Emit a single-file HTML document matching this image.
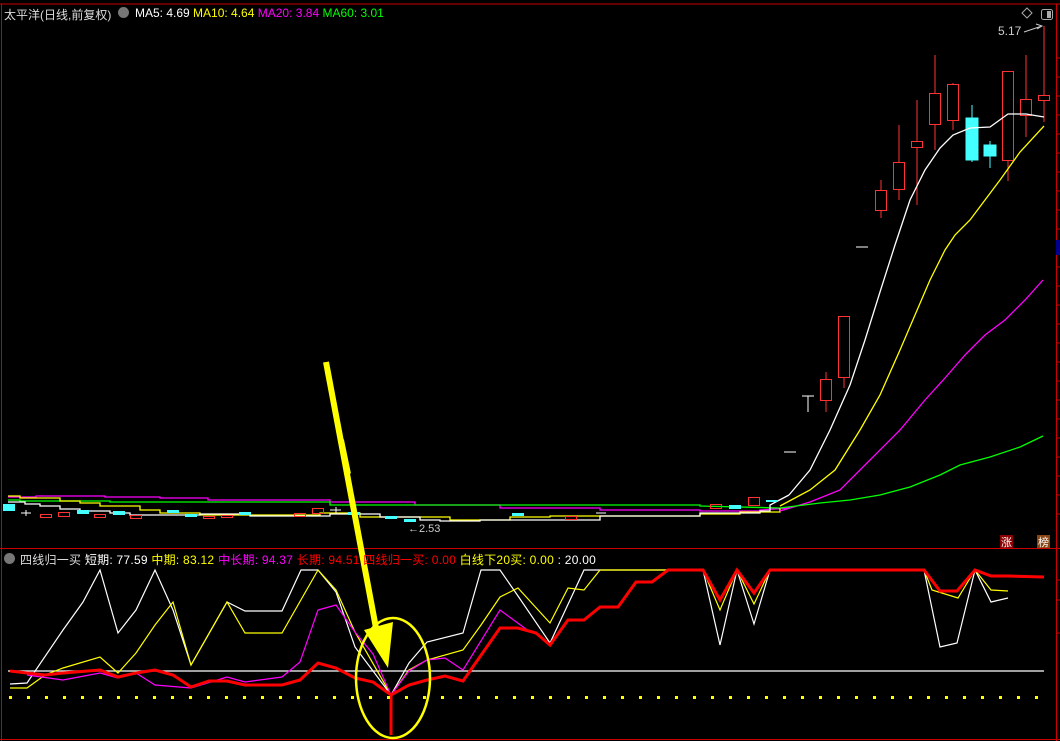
<!DOCTYPE html><html><head><meta charset="utf-8"><style>
html,body{margin:0;padding:0;background:#000;width:1060px;height:741px;overflow:hidden;font-family:"Liberation Sans","Noto Sans CJK SC",sans-serif}
.t{position:absolute;font-size:12px;white-space:nowrap;top:6px}
</style></head><body>
<svg width="1060" height="741" style="position:absolute;left:0;top:0" xmlns="http://www.w3.org/2000/svg">
<g stroke="#c00" fill="none">
<line x1="0" y1="4" x2="1060" y2="4"/><line x1="1.5" y1="4" x2="1.5" y2="741"/>
<line x1="1056.5" y1="4" x2="1056.5" y2="741"/><line x1="0" y1="548.5" x2="1060" y2="548.5"/>
<line x1="0" y1="739.5" x2="1060" y2="739.5"/>
</g>
<g stroke="#c00"><path d="M1056 58h4M1056 77h4M1056 96h4M1056 115h4M1056 134h4M1056 153h4M1056 172h4M1056 191h4M1056 210h4M1056 229h4M1056 267h4M1056 286h4M1056 305h4M1056 324h4M1056 343h4M1056 362h4M1056 381h4M1056 400h4M1056 419h4M1056 438h4M1056 457h4M1056 476h4M1056 495h4M1056 514h4M1056 580h4M1056 600h4M1056 633h4"/></g>
<rect x="1056" y="240" width="4" height="15" fill="#00008b"/>
<g fill="none" stroke-width="1.3">
<path stroke="#f0f" d="M8 497H36V496H105V497H160V498H208V500H330V502H415V505H500V508H600V510H700V511H760V510L790 508"/>
<path stroke="#0f0" d="M8 500H20V501H110V502H330V505H700V506L780 508"/>
<path stroke="#ff0" d="M8 496H20V498H60V501H80V503H100V506H140V510H160V513H200V515H320V513H360V517H450V520H510V517H550V516H700V514H740V512H780V508"/>
<path stroke="#fff" d="M8 502H25V504H40V506H60V509H80V511H110V513H130V515H200V514H250V516H330V514H380V517H420V520H440V521H480V520H600V516H700V513H760V511H770V505L789 495"/>
</g>
<g fill="#4ff"><rect x="3" y="504" width="12" height="7"/><rect x="77" y="510" width="12" height="4"/><rect x="113" y="511" width="12" height="4"/><rect x="167" y="510" width="12" height="3"/><rect x="185" y="514" width="12" height="3"/><rect x="239" y="512" width="12" height="3"/><rect x="348" y="512" width="12" height="3"/><rect x="385" y="516" width="12" height="3"/><rect x="404" y="519" width="12" height="3"/><rect x="512" y="513" width="12" height="3"/><rect x="729" y="505" width="12" height="4"/><rect x="766" y="500" width="12" height="2"/></g>
<g fill="none" stroke="#f33"><rect x="40.5" y="514.5" width="11" height="3"/><rect x="58.5" y="512.5" width="11" height="4"/><rect x="94.5" y="514.5" width="11" height="3"/><rect x="130.5" y="515.5" width="11" height="3"/><rect x="203.5" y="516.5" width="11" height="2"/><rect x="221.5" y="515.5" width="11" height="2"/><rect x="294.5" y="513.5" width="11" height="3"/><rect x="312.5" y="508.5" width="11" height="5"/><rect x="565.5" y="516.5" width="11" height="3"/><rect x="710.5" y="504.5" width="11" height="4"/><rect x="748.5" y="497.5" width="11" height="8"/></g>
<g stroke="#fff"><path d="M21 513h10M26 510v6M330 510h11M336 507v6M596 513h10"/></g>
<text x="408" y="532" fill="#ccc" font-size="11" font-family="Liberation Sans">←2.53</text>
<g stroke="#fff"><path d="M784 452h12M802 396h12M808 396v16M856 247h12"/></g>
<g stroke="#f33" fill="none">
<path d="M826 372v40M844 377v11M881 180v38M899 125v75M917 100v105M935 55v95M953 83v47M1008 71v110M1026 55v82M1044 26v96"/>
<rect x="820.5" y="379.5" width="11" height="21" fill="#000"/><rect x="838.5" y="316.5" width="11" height="61" fill="#000"/>
<rect x="875.5" y="190.5" width="11" height="20" fill="#000"/><rect x="893.5" y="162.5" width="11" height="27" fill="#000"/>
<rect x="911.5" y="141.5" width="11" height="6" fill="#000"/><rect x="929.5" y="93.5" width="11" height="31" fill="#000"/>
<rect x="947.5" y="84.5" width="11" height="36" fill="#000"/><rect x="1002.5" y="71.5" width="11" height="89" fill="#000"/>
<rect x="1020.5" y="99.5" width="11" height="16" fill="#000"/><rect x="1038.5" y="95.5" width="11" height="5" fill="#000"/>
</g>
<g stroke="#4ff" fill="#4ff"><path d="M972 105v57M990 141v27"/><rect x="966" y="118" width="12" height="42"/><rect x="984" y="145" width="12" height="11"/></g>
<g fill="none" stroke-width="1.3">
<path stroke="#fff" d="M789 495L810 470L830 430L850 385L865 340L880 292L895 245L910 200L925 170L940 148L953 135L970 128L990 127L1008 114L1026 114L1044 117"/>
<path stroke="#ff0" d="M780 506L810 490L835 470L860 430L880 395L900 350L915 315L930 280L945 250L955 235L970 220L985 200L1000 180L1020 152L1044 126"/>
<path stroke="#f0f" d="M780 511L810 502L840 490L870 460L900 430L925 400L945 378L965 355L985 335L1005 320L1025 300L1043 280"/>
<path stroke="#0f0" d="M780 508L820 503L850 500L880 495L910 487L940 475L960 465L990 457L1020 447L1043 436"/>
</g>
<text x="998" y="35" fill="#ccc" font-size="12" font-family="Liberation Sans">5.17</text>
<path d="M1024 32L1042 26M1036 24l6 2-5 3" stroke="#ccc" fill="none"/>
<path d="M1027 8l5 5-5 5-5-5z" stroke="#aaa" fill="none"/>
<rect x="1041.5" y="9.5" width="11" height="10" rx="2" stroke="#aaa" fill="none"/><rect x="1047" y="11" width="4" height="7" fill="#aaa"/>
<rect x="1000" y="535" width="13" height="13" fill="#8b0000"/><rect x="1037" y="535" width="13" height="13" fill="#8b4513"/>
<text x="1001" y="546" fill="#fff" font-size="11" font-family="Noto Sans CJK SC">涨</text>
<text x="1038" y="546" fill="#fff" font-size="11" font-family="Noto Sans CJK SC">榜</text>
<line x1="8" y1="671" x2="1044" y2="671" stroke="#fff" stroke-width="1.3"/>
<g fill="none" stroke-width="1.2">
<path stroke="#fff" d="M10 684L27 683L63 630L83 602L100 570L118 633L136 610L155 570L173 610L191 665L227 602L245 611L282 611L301 570L318 570L336 592L355 647L391 695L409 663L427 642L463 633L481 570L500 570L518 596L550 643L584 570L703 570L720 645L737 570L754 624L770 570L924 570L940 647L957 643L975 570L991 602L1008 598"/>
<path stroke="#ff0" d="M10 688L27 688L45 675L63 668L100 657L118 673L136 653L155 625L173 602L191 665L227 602L245 633L282 633L318 570L336 590L355 632L391 695L409 670L427 660L463 650L481 625L500 597L518 588L550 623L568 588L584 590L600 570L703 570L720 610L737 570L754 604L770 570L924 570L932 590L958 598L975 570L991 590L1008 591"/>
<path stroke="#f0f" d="M27 675L63 680L100 673L118 678L136 673L155 685L191 688L227 677L245 682L282 677L300 662L318 610L336 605L355 632L373 654L391 695L409 671L427 660L445 658L463 670L500 610L530 632"/>
</g>
<path stroke="#f00" stroke-width="3" fill="none" d="M10 671L27 673L45 675L63 673L100 670L118 677L136 673L155 670L173 675L191 687L209 681L227 681L245 685L282 685L300 680L318 663L336 668L355 678L373 682L391 695L409 685L427 680L445 676L463 681L500 628L518 628L536 633L550 645L568 620L584 620L600 607L618 607L636 582L652 582L668 570L703 570L720 600L737 570L754 593L770 570L924 570L940 591L957 591L975 570L991 576L1008 576L1044 577M391 695V735"/>
<ellipse cx="393" cy="678" rx="37" ry="60" stroke="#ff0" stroke-width="2.5" fill="none"/>
<path d="M326 362L376 628" stroke="#ff0" stroke-width="6"/>
<path d="M364 630L388 668L393 622Z" fill="#ff0"/>
</svg>
<div class="t" style="left:4px;color:#ddd">太平洋(日线,前复权)</div>
<div style="position:absolute;left:118px;top:7px;width:11px;height:11px;border-radius:50%;background:#777"></div>
<div class="t" style="left:135px;color:#fff">MA5: 4.69 <span style="color:#ff0">MA10: 4.64</span> <span style="color:#f0f">MA20: 3.84</span> <span style="color:#0f0">MA60: 3.01</span></div>
<div style="position:absolute;left:4px;top:553px;width:11px;height:11px;border-radius:50%;background:#777"></div>
<div class="t" style="top:551px;left:20px;color:#ddd;letter-spacing:0.25px">四线归一买 <span style="color:#fff">短期: 77.59</span> <span style="color:#ff0">中期: 83.12</span> <span style="color:#f0f">中长期: 94.37</span> <span style="color:#f00">长期: 94.51</span> <span style="color:#f00">四线归一买: 0.00</span> <span style="color:#ff0">白线下20买: 0.00</span> <span style="color:#fff">: 20.00</span></div>
<svg width="1060" height="741" style="position:absolute;left:0;top:0;pointer-events:none">
<g fill="#ff0">
<rect x="9" y="696" width="3" height="3"/><rect x="27" y="696" width="3" height="3"/><rect x="45" y="696" width="3" height="3"/><rect x="63" y="696" width="3" height="3"/><rect x="81" y="696" width="3" height="3"/><rect x="99" y="696" width="3" height="3"/><rect x="117" y="696" width="3" height="3"/><rect x="135" y="696" width="3" height="3"/><rect x="153" y="696" width="3" height="3"/><rect x="171" y="696" width="3" height="3"/><rect x="189" y="696" width="3" height="3"/><rect x="207" y="696" width="3" height="3"/><rect x="225" y="696" width="3" height="3"/><rect x="243" y="696" width="3" height="3"/><rect x="261" y="696" width="3" height="3"/><rect x="279" y="696" width="3" height="3"/><rect x="297" y="696" width="3" height="3"/><rect x="315" y="696" width="3" height="3"/><rect x="333" y="696" width="3" height="3"/><rect x="351" y="696" width="3" height="3"/><rect x="369" y="696" width="3" height="3"/><rect x="387" y="696" width="3" height="3"/><rect x="405" y="696" width="3" height="3"/><rect x="423" y="696" width="3" height="3"/><rect x="441" y="696" width="3" height="3"/><rect x="459" y="696" width="3" height="3"/><rect x="477" y="696" width="3" height="3"/><rect x="495" y="696" width="3" height="3"/><rect x="513" y="696" width="3" height="3"/><rect x="531" y="696" width="3" height="3"/><rect x="549" y="696" width="3" height="3"/><rect x="567" y="696" width="3" height="3"/><rect x="585" y="696" width="3" height="3"/><rect x="603" y="696" width="3" height="3"/><rect x="621" y="696" width="3" height="3"/><rect x="639" y="696" width="3" height="3"/><rect x="657" y="696" width="3" height="3"/><rect x="675" y="696" width="3" height="3"/><rect x="693" y="696" width="3" height="3"/><rect x="711" y="696" width="3" height="3"/><rect x="729" y="696" width="3" height="3"/><rect x="747" y="696" width="3" height="3"/><rect x="765" y="696" width="3" height="3"/><rect x="783" y="696" width="3" height="3"/><rect x="801" y="696" width="3" height="3"/><rect x="819" y="696" width="3" height="3"/><rect x="837" y="696" width="3" height="3"/><rect x="855" y="696" width="3" height="3"/><rect x="873" y="696" width="3" height="3"/><rect x="891" y="696" width="3" height="3"/><rect x="909" y="696" width="3" height="3"/><rect x="927" y="696" width="3" height="3"/><rect x="945" y="696" width="3" height="3"/><rect x="963" y="696" width="3" height="3"/><rect x="981" y="696" width="3" height="3"/><rect x="999" y="696" width="3" height="3"/><rect x="1017" y="696" width="3" height="3"/><rect x="1035" y="696" width="3" height="3"/>
</g>
<path d="M341 440L348 474" stroke="#ff0" stroke-width="6"/>
</svg>
</body></html>
